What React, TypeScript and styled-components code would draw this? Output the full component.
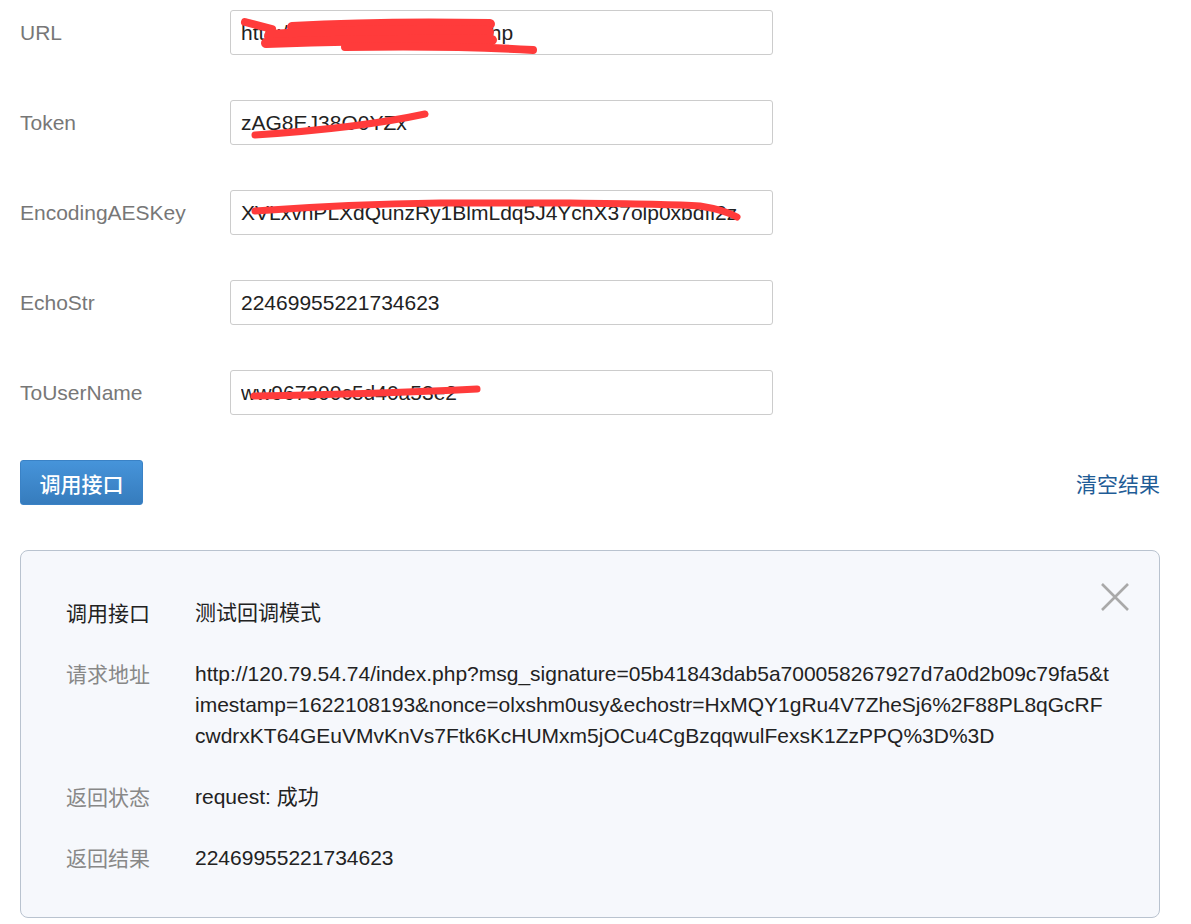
import React from "react";
import styled, { createGlobalStyle } from "styled-components";

const GlobalStyle = createGlobalStyle`
  body {
    margin: 0;
    background: #fff;
    font-family: "Liberation Sans", Arial, "Noto Sans CJK SC", sans-serif;
  }
`;

interface Field {
  label: string;
  value: string;
  marks?: { d: string; w: number }[];
}

const fields: Field[] = [
  {
    label: "URL",
    value: "http://120.79.54.74/index.php",
    marks: [
      { d: "M15 12 L42 19", w: 8 },
      { d: "M62 17 Q150 12 260 14", w: 10 },
      { d: "M40 26 Q150 19 258 22", w: 12 },
      { d: "M36 33 Q150 29 262 30", w: 10 },
      { d: "M115 37 Q220 35 303 40", w: 8 },
    ],
  },
  {
    label: "Token",
    value: "zAG8EJ38O0YZx",
    marks: [{ d: "M25 35 Q130 28 195 14", w: 7 }],
  },
  {
    label: "EncodingAESKey",
    value: "XVLxvhPLXdQunzRy1BlmLdq5J4YchX37olp0xbdfi2z",
    marks: [
      {
        d: "M25 21 Q120 14 210 13 L340 13 Q440 14 470 16 Q495 20 507 27",
        w: 7,
      },
    ],
  },
  { label: "EchoStr", value: "22469955221734623" },
  {
    label: "ToUserName",
    value: "ww967300c5d40a53e2",
    marks: [{ d: "M24 26 Q150 24 247 19", w: 7 }],
  },
];

const results = [
  { label: "调用接口", value: "测试回调模式", strong: true },
  {
    label: "请求地址",
    value:
      "http://120.79.54.74/index.php?msg_signature=05b41843dab5a700058267927d7a0d2b09c79fa5&timestamp=1622108193&nonce=olxshm0usy&echostr=HxMQY1gRu4V7ZheSj6%2F88PL8qGcRFcwdrxKT64GEuVMvKnVs7Ftk6KcHUMxm5jOCu4CgBzqqwulFexsK1ZzPPQ%3D%3D",
  },
  { label: "返回状态", value: "request: 成功" },
  { label: "返回结果", value: "22469955221734623" },
];

const App = () => (
  <>
    <GlobalStyle />
    <Page>
      <Form>
        {fields.map((f) => (
          <FormRow key={f.label}>
            <Label>{f.label}</Label>
            <InputWrap>
              <TextInput defaultValue={f.value} readOnly />
              {f.marks && (
                <Scribble viewBox="0 0 543 45">
                  {f.marks.map((m, i) => (
                    <path
                      key={i}
                      d={m.d}
                      stroke="#ff3b3b"
                      strokeWidth={m.w}
                      strokeLinecap="round"
                      strokeLinejoin="round"
                      fill="none"
                    />
                  ))}
                </Scribble>
              )}
            </InputWrap>
          </FormRow>
        ))}
      </Form>

      <Toolbar>
        <CallButton>调用接口</CallButton>
        <ClearLink href="#">清空结果</ClearLink>
      </Toolbar>

      <ResultPanel>
        <CloseButton aria-label="close">
          <svg width="30" height="30" viewBox="0 0 30 30">
            <path
              d="M2 2 L28 28 M28 2 L2 28"
              stroke="#a9a9a9"
              strokeWidth="2.6"
              fill="none"
            />
          </svg>
        </CloseButton>
        {results.map((r) => (
          <ResultRow key={r.label}>
            <ResultLabel strong={r.strong}>{r.label}</ResultLabel>
            <ResultValue>{r.value}</ResultValue>
          </ResultRow>
        ))}
      </ResultPanel>
    </Page>
  </>
);

const Page = styled.div`
  width: 1140px;
  padding: 10px 0 0 20px;
`;

const Form = styled.div`
  display: flex;
  flex-direction: column;
  gap: 45px;
`;

const FormRow = styled.div`
  display: flex;
  align-items: center;
`;

const Label = styled.div`
  width: 210px;
  font-size: 21px;
  color: #777;
`;

const InputWrap = styled.div`
  position: relative;
  width: 543px;
  height: 45px;
`;

const TextInput = styled.input`
  box-sizing: border-box;
  width: 100%;
  height: 100%;
  padding: 0 10px;
  border: 1px solid #cccccc;
  border-radius: 3px;
  font-family: "Liberation Sans", Arial, sans-serif;
  font-size: 21px;
  color: #222;
  background: #fff;
  outline: none;
`;

const Scribble = styled.svg`
  position: absolute;
  inset: 0;
  width: 543px;
  height: 45px;
  pointer-events: none;
`;

const Toolbar = styled.div`
  display: flex;
  justify-content: space-between;
  align-items: center;
  margin-top: 45px;
`;

const CallButton = styled.button`
  width: 123px;
  height: 45px;
  border: 1px solid #3a82c6;
  border-radius: 3px;
  background: linear-gradient(#4694da, #367cbd);
  color: #fff;
  font-family: "Noto Sans CJK SC", sans-serif;
  font-size: 21px;
  font-weight: 500;
  cursor: pointer;
`;

const ClearLink = styled.a`
  font-family: "Noto Sans CJK SC", sans-serif;
  font-size: 21px;
  color: #1f5c96;
  text-decoration: none;
`;

const ResultPanel = styled.div`
  position: relative;
  box-sizing: border-box;
  margin-top: 45px;
  height: 368px;
  padding: 46px 0 0 45px;
  border: 1px solid #b9c3cf;
  border-radius: 8px;
  background: #f6f8fc;
  display: flex;
  flex-direction: column;
  gap: 30px;
`;

const CloseButton = styled.div`
  position: absolute;
  top: 31px;
  right: 29px;
  width: 30px;
  height: 30px;
  cursor: pointer;
`;

const ResultRow = styled.div`
  display: flex;
  font-size: 21px;
  line-height: 31px;
`;

const ResultLabel = styled.div<{ strong?: boolean }>`
  flex: 0 0 129px;
  font-family: "Noto Sans CJK SC", sans-serif;
  color: ${(p) => (p.strong ? "#222" : "#888")};
`;

const ResultValue = styled.div`
  width: 917px;
  color: #222;
  word-break: break-all;
  font-family: "Liberation Sans", Arial, "Noto Sans CJK SC", sans-serif;
`;

export default App;
